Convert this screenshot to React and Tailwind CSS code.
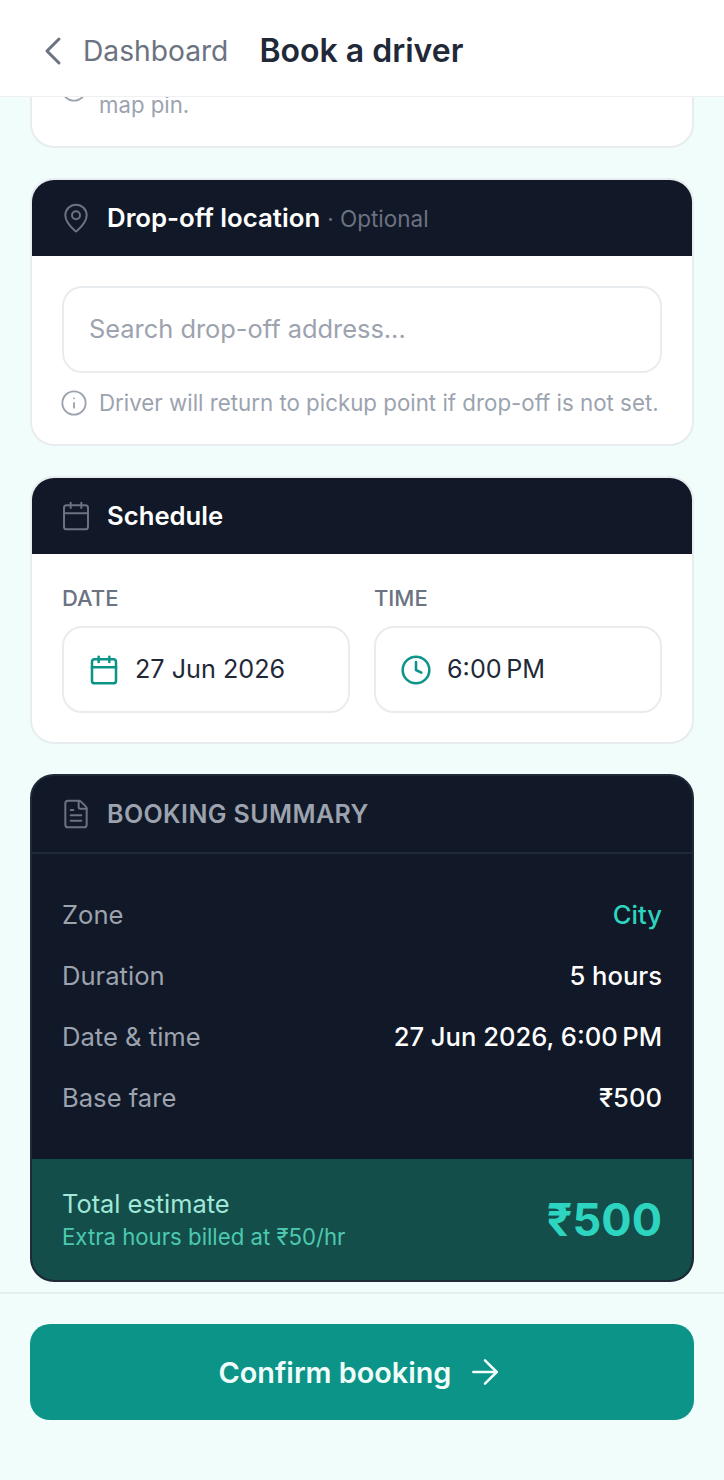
import { ArrowRight, Calendar, ChevronLeft, Clock, FileText, Info, MapPin } from 'lucide-react';

const font = { fontFamily: 'Inter, "Noto Sans", sans-serif' };

function CardHeader({ icon: Icon, children }) {
  return (
    <div className="flex h-[76px] items-center gap-[15px] bg-[#111827] pl-[28px]">
      <span className="flex w-[32px] shrink-0 justify-center">
        <Icon size={32} strokeWidth={1.5} className="text-[#6b7280]" />
      </span>
      {children}
    </div>
  );
}

function Row({ label, value, valueClass = 'text-white' }) {
  return (
    <div className="flex h-[61px] items-center justify-between">
      <span className="text-[25.6px] text-[#9ca3af]">{label}</span>
      <span className={`text-[25.6px] font-medium ${valueClass}`}>{value}</span>
    </div>
  );
}

function PickerField({ icon: Icon, value }) {
  return (
    <div className="flex h-[87px] items-center gap-[15px] rounded-[20px] border-2 border-[#e9ecef] bg-white px-[24px]">
      <Icon size={32} strokeWidth={1.9} className="shrink-0 text-[#0d9488]" />
      <span className="text-[25.2px] text-[#1f2937]">{value}</span>
    </div>
  );
}

export default function App() {
  return (
    <div style={font} className="flex h-[1480px] w-[724px] flex-col overflow-hidden bg-[#f0fdfa]">
      <header className="relative z-10 flex h-[97px] shrink-0 items-center border-b border-[#eef0f2] bg-white pl-[29px] pt-[6px]">
        <ChevronLeft size={48} strokeWidth={1.5} className="text-[#6b7280]" />
        <span className="ml-[6px] text-[28.2px] text-[#6b7280]">Dashboard</span>
        <h1 className="ml-[31px] text-[32px] font-semibold text-[#1f2937]">Book a driver</h1>
      </header>

      <main className="flex flex-col gap-[30px] px-[30px]">
        {/* first card is scrolled under the header */}
        <section className="flex h-[51px] items-start gap-[11px] rounded-b-[24px] border-x-2 border-b-2 border-[#e9ecef] bg-white pl-[28px]">
          <Info size={28} strokeWidth={1.6} className="mt-[-22px] shrink-0 text-[#9ca3af]" />
          <span className="text-[22.2px] leading-[16px] text-[#9ca3af]">map pin.</span>
        </section>

        <section className="overflow-hidden rounded-[24px] border-2 border-[#e9ecef] bg-white">
          <CardHeader icon={MapPin}>
            <div className="flex items-baseline">
              <span className="text-[25.8px] font-semibold text-white">Drop-off location</span>
              <span className="ml-[7px] text-[22.5px] text-[#6b7280]">· Optional</span>
            </div>
          </CardHeader>
          <div className="px-[30px] pb-[25px] pt-[30px]">
            <div className="flex h-[87px] items-center rounded-[20px] border-2 border-[#e9ecef] px-[25px] text-[25.4px] text-[#9ca3af]">
              Search drop-off address...
            </div>
            <div className="ml-[-2px] mt-[13px] flex items-center gap-[11px]">
              <Info size={28} strokeWidth={1.6} className="shrink-0 text-[#9ca3af]" />
              <span className="text-[22.3px] text-[#9ca3af]">Driver will return to pickup point if drop-off is not set.</span>
            </div>
          </div>
        </section>

        <section className="overflow-hidden rounded-[24px] border-2 border-[#e9ecef] bg-white">
          <CardHeader icon={Calendar}>
            <span className="text-[25.7px] font-semibold text-white">Schedule</span>
          </CardHeader>
          <div className="grid grid-cols-2 gap-[24px] px-[30px] pb-[29px] pt-[30px]">
            <div>
              <div className="mb-[14px] text-[22px] font-medium leading-[28px] text-[#6b7280]">DATE</div>
              <PickerField icon={Calendar} value="27 Jun 2026" />
            </div>
            <div>
              <div className="mb-[14px] text-[22px] font-medium leading-[28px] text-[#6b7280]">TIME</div>
              <PickerField icon={Clock} value={'6:00\u202fPM'} />
            </div>
          </div>
        </section>

        <section className="overflow-hidden rounded-[24px] border-2 border-[#1f2937] bg-[#111827]">
          <div className="flex h-[78px] items-center gap-[15px] border-b-2 border-[#1f2937] pl-[28px]">
            <span className="flex w-[32px] shrink-0 justify-center">
              <FileText size={32} strokeWidth={1.5} className="text-[#6b7280]" />
            </span>
            <span className="text-[25px] font-semibold tracking-[0.4px] text-[#9ca3af]">BOOKING SUMMARY</span>
          </div>
          <div className="px-[30px] pb-[31px] pt-[30px]">
            <Row label="Zone" value="City" valueClass="text-[#2dd4bf]" />
            <Row label="Duration" value="5 hours" />
            <Row label="Date &amp; time" value={'27 Jun 2026, 6:00\u202fPM'} />
            <Row label="Base fare" value="₹500" />
          </div>
          <div className="flex h-[121px] items-center justify-between bg-[#134e4a] px-[30px]">
            <div>
              <div className="text-[25.4px] leading-[34px] text-[#a1e8d9]">Total estimate</div>
              <div className="text-[22.2px] leading-[32px] text-[#4cc9b0]">Extra hours billed at ₹50/hr</div>
            </div>
            <div className="text-[45px] font-bold text-[#2dd4bf]">₹500</div>
          </div>
        </section>
      </main>

      <footer className="mt-[10px] flex-1 border-t-2 border-[#e5eeee] px-[30px] pt-[30px]">
        <button className="flex h-[96px] w-full items-center justify-center gap-[14px] rounded-[20px] bg-[#0d9488] text-[28.8px] font-semibold text-[#f0fdfa]">
          Confirm booking
          <ArrowRight size={40} strokeWidth={1.5} />
        </button>
      </footer>
    </div>
  );
}
